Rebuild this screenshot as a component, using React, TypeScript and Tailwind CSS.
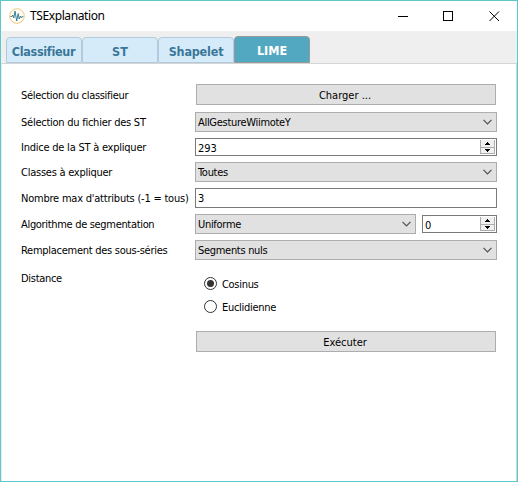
import React from 'react';

function Label({ children, className = '' }: { children: React.ReactNode; className?: string }) {
  return <div className={`w-[175px] shrink-0 pl-px whitespace-nowrap ${className}`}>{children}</div>;
}

function Button({ children }: { children: React.ReactNode }) {
  return (
    <button className="ml-px flex h-[21px] w-[300px] items-center justify-center border border-[#adadad] bg-[#e1e1e1] pt-0.5 pr-0.5">
      {children}
    </button>
  );
}

function Combo({ children, className = 'w-[302px]' }: { children: React.ReactNode; className?: string }) {
  return (
    <div className={`flex h-5 items-center justify-between border border-[#adadad] bg-[#e1e1e1] pr-1 pl-0.5 ${className}`}>
      <span className="pt-0.5 tracking-[-0.3px] whitespace-nowrap">{children}</span>
      <svg className="h-[6px] w-[9px]" viewBox="0 0 9 6" fill="none" stroke="#505050" strokeWidth="1.2">
        <path d="M.5.8 4.5 4.8 8.5.8" />
      </svg>
    </div>
  );
}

function SpinBox({ value, className = 'w-[302px]' }: { value: string; className?: string }) {
  return (
    <div className={`flex h-[18px] items-center justify-between border border-[#7a7a7a] bg-white pr-px pl-0.5 ${className}`}>
      <span className="pt-[3px]">{value}</span>
      <svg className="h-4 w-[15px]" viewBox="0 0 15 16" shapeRendering="crispEdges">
        <path d="M0 1h15v14H0z" fill="#acacac" />
        <path d="M1 1h13v7H1zM1 9h13v5H1z" fill="#f0f0f0" />
        <path d="M7 3h1v1h1v1h1v1H5V5h1V4h1zM5 10h5v1H9v1H8v1H7v-1H6v-1H5z" fill="#000" />
      </svg>
    </div>
  );
}

function Radio({ label, checked = false }: { label: string; checked?: boolean }) {
  return (
    <div className="flex h-[23px] items-center gap-[5px]">
      <span className="flex size-[13px] items-center justify-center rounded-full border border-[#333] bg-white">
        {checked && <span className="size-[7px] rounded-full bg-[#333]" />}
      </span>
      <span className="pt-0.5 tracking-[-0.3px]">{label}</span>
    </div>
  );
}

function Tab({ children }: { children: React.ReactNode }) {
  return (
    <div className="flex h-[26px] w-[76px] items-center justify-center rounded-t-[4px] border border-[#b1cade] bg-[#d6ebf9] pt-[3px] text-[#3b7798]">
      {children}
    </div>
  );
}

export default function App() {
  return (
    <div className="flex h-[482px] w-[518px] flex-col overflow-hidden border border-[#5ec7c7] bg-white font-['DejaVu_Sans_Condensed','DejaVu_Sans',sans-serif] text-[11px] leading-[14px] text-black [font-stretch:condensed]">
      <header className="flex h-[30px] shrink-0 items-center">
        <svg className="ml-2 size-4" viewBox="0 0 16 16" fill="none">
          <circle cx="8" cy="8" r="7.3" fill="#fffdf8" stroke="#f2c77e" />
          <path d="M1.500 8.500H3l.8-1.500 1 3L6 3l1.700 10L9.200 5.500l1 5.500 1.300-3 1 2 .8-1.500h1" stroke="#3c7f91" />
        </svg>
        <h1 className="ml-[5px] font-['Noto_Sans',sans-serif] text-xs tracking-[-0.4px]">TSExplanation</h1>
        <svg className="mr-[17px] ml-auto h-3 w-[102px]" viewBox="0 0 102 12" fill="none" stroke="#000">
          <path d="M0 6.5h10M45.500 1.500h9v9h-9z" shapeRendering="crispEdges" />
          <path d="m91.500 1.500 9.500 9.500m0-9.500-9.500 9.500" />
        </svg>
      </header>

      <nav className="flex h-8 shrink-0 items-end bg-[#efefef] pl-[5px] text-[12.5px] font-bold">
        <Tab><span className="-ml-px tracking-[-0.3px]">Classifieur</span></Tab>
        <Tab>ST</Tab>
        <Tab><span className="tracking-[-0.2px]">Shapelet</span></Tab>
        <div className="flex h-[27px] w-[76px] items-center justify-center rounded-t-[4px] border border-[#999] bg-[#53a8c1] pt-[3px] text-white">
          LIME
        </div>
      </nav>

      <main className="flex flex-1 flex-col border-x border-t border-[#d5d5d5] border-l-[#eee] pt-5 pl-[18px]">
        <div className="flex h-[21px] items-center">
          <Label className="pt-0.5 tracking-[-0.3px]">Sélection du classifieur</Label>
          <Button>Charger ...</Button>
        </div>
        <div className="mt-[7px] flex h-5 items-center">
          <Label className="pt-0.5 tracking-[-0.25px]">Sélection du fichier des ST</Label>
          <Combo>AllGestureWiimoteY</Combo>
        </div>
        <div className="mt-[6px] flex h-[18px] items-center">
          <Label className="pt-0.5 tracking-[-0.23px]">Indice de la ST à expliquer</Label>
          <SpinBox value="293" />
        </div>
        <div className="mt-[6px] flex h-5 items-center">
          <Label className="pt-0.5 tracking-[-0.25px]">Classes à expliquer</Label>
          <Combo>Toutes</Combo>
        </div>
        <div className="mt-[6px] flex h-5 items-center">
          <Label className="pt-0.5 tracking-[-0.22px]">Nombre max d'attributs (-1 = tous)</Label>
          <div className="h-5 w-[302px] border border-[#7a7a7a] bg-white pt-[3px] pl-0.5">3</div>
        </div>
        <div className="mt-[6px] flex h-5 items-center">
          <Label className="pt-0.5 tracking-[-0.32px]">Algorithme de segmentation</Label>
          <Combo className="w-[221px]">Uniforme</Combo>
          <SpinBox value="0" className="ml-[6px] w-[75px]" />
        </div>
        <div className="mt-[6px] flex h-5 items-center">
          <Label className="pt-0.5 tracking-[-0.27px]">Remplacement des sous-séries</Label>
          <Combo>Segments nuls</Combo>
        </div>
        <div className="mt-3 flex items-start">
          <Label className="tracking-[-0.3px]">Distance</Label>
          <div className="pl-[9px]">
            <Radio label="Cosinus" checked />
            <Radio label="Euclidienne" />
          </div>
        </div>
        <div className="mt-[13px] pl-[175px]">
          <Button>Exécuter</Button>
        </div>
      </main>
    </div>
  );
}
